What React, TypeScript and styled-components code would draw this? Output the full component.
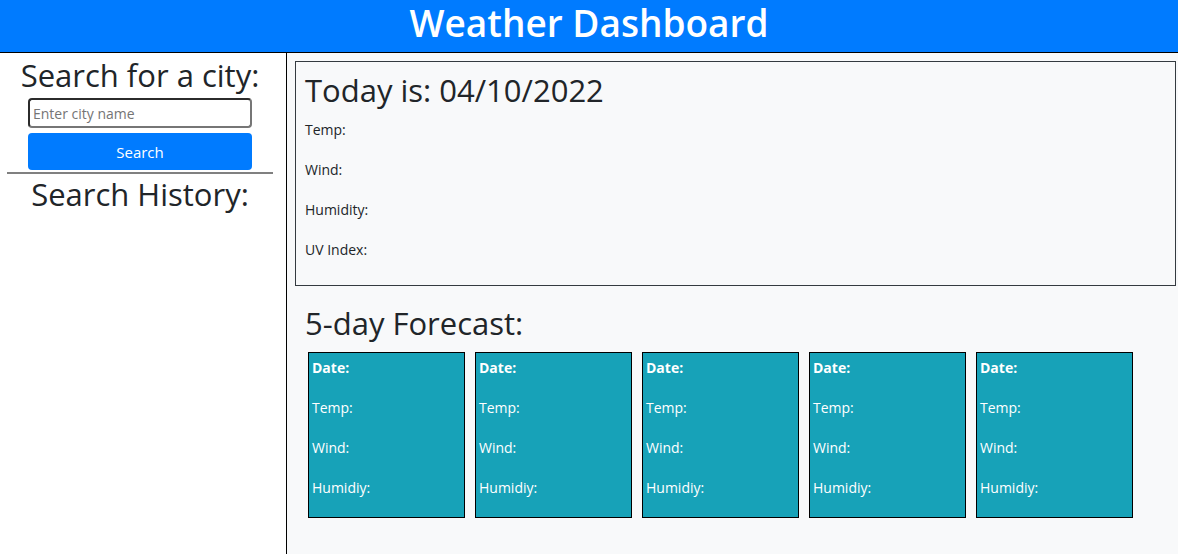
import styled, { createGlobalStyle } from 'styled-components';

const forecastDays = [1, 2, 3, 4, 5];

const todayFields = ['Temp:', 'Wind:', 'Humidity:', 'UV Index:'];

const App = () => {
  return (
    <>
      <GlobalStyle />
      <Header>
        <Title>Weather Dashboard</Title>
      </Header>
      <Body>
        <Sidebar>
          <SideHeading>Search for a city:</SideHeading>
          <CityInput type="text" placeholder="Enter city name" />
          <SearchButton type="button">Search</SearchButton>
          <Divider />
          <SideHeading>Search History:</SideHeading>
        </Sidebar>
        <Main>
          <TodayBox>
            <SectionHeading>Today is: 04/10/2022</SectionHeading>
            {todayFields.map((label) => (
              <Line key={label}>{label}</Line>
            ))}
          </TodayBox>
          <ForecastSection>
            <SectionHeading>5-day Forecast:</SectionHeading>
            <CardRow>
              {forecastDays.map((day) => (
                <Card key={day}>
                  <Line $bold>Date:</Line>
                  <Line>Temp:</Line>
                  <Line>Wind:</Line>
                  <Line>Humidiy:</Line>
                </Card>
              ))}
            </CardRow>
          </ForecastSection>
        </Main>
      </Body>
    </>
  );
};

export default App;

const GlobalStyle = createGlobalStyle`
  html, body {
    margin: 0;
    padding: 0;
    height: 100%;
    overflow: hidden;
  }
  body {
    font-family: "Open Sans", "Noto Sans", sans-serif;
    font-size: 16px;
    line-height: 1.5;
    color: #212529;
    background: #fff;
  }
  * {
    box-sizing: border-box;
  }
`;

const Header = styled.header`
  display: flex;
  align-items: flex-start;
  justify-content: center;
  height: 53px;
  padding-top: 2px;
  background: #007bff;
  border-bottom: 1px solid #000;
`;

const Title = styled.h1`
  margin: 0;
  font-size: 37px;
  font-weight: 600;
  line-height: 42px;
  color: #fff;
`;

const Body = styled.div`
  display: flex;
  height: 501px;
`;

const Sidebar = styled.aside`
  display: flex;
  flex-direction: column;
  align-items: center;
  width: 287px;
  flex-shrink: 0;
  padding: 4px 13px 0 7px;
  border-right: 1px solid #000;
  background: #fff;
`;

const SideHeading = styled.h2`
  margin: 0;
  font-size: 31px;
  font-weight: 500;
  line-height: 1.2;
  text-align: center;
  white-space: nowrap;
`;

const CityInput = styled.input`
  width: 224px;
  height: 30px;
  margin-top: 4px;
  padding: 0 3px;
  font-family: inherit;
  font-size: 14px;
  color: #212529;
  background: #fff;
  border: 2px solid #767676;
  border-top-color: #2b2b2b;
  border-left-color: #2b2b2b;
  border-radius: 4px;

  &::placeholder {
    color: #757575;
  }
`;

const SearchButton = styled.button`
  width: 224px;
  height: 37px;
  margin-top: 5px;
  font-family: inherit;
  font-size: 15px;
  color: #fff;
  background: #007bff;
  border: none;
  border-radius: 4px;
  cursor: pointer;
`;

const Divider = styled.hr`
  align-self: stretch;
  margin: 2px 0 2px;
  border: none;
  border-top: 2px solid #808080;
`;

const Main = styled.main`
  flex: 1;
  padding: 8px 2px 8px 8px;
  background: #f8f9fa;
`;

const TodayBox = styled.section`
  padding: 10px 9px 7px;
  border: 1px solid #343a40;
`;

const SectionHeading = styled.h2`
  margin: 0 0 9px;
  font-size: 31px;
  font-weight: 500;
  line-height: 1.2;
`;

const Line = styled.p<{ $bold?: boolean }>`
  margin: 0 0 16px;
  font-size: 14px;
  line-height: 24px;
  font-weight: ${(p) => (p.$bold ? 700 : 400)};
`;

const ForecastSection = styled.section`
  padding: 19px 0 0 10px;
`;

const CardRow = styled.div`
  display: flex;
  gap: 10px;
  margin-top: 10px;
  padding-left: 3px;
`;

const Card = styled.div`
  width: 157px;
  height: 166px;
  padding: 3px 3px 0;
  background: #17a2b8;
  border: 1px solid #000;
  color: #fff;
`;
